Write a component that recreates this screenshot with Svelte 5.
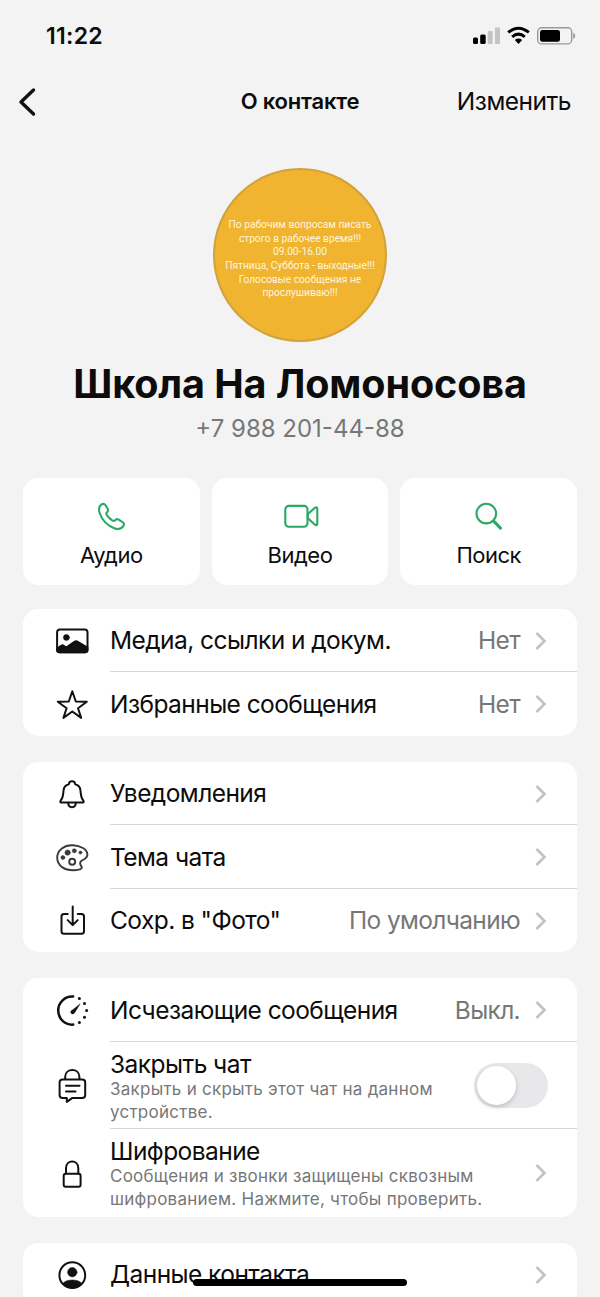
<script>
	const actions = [
		{ icon: 'phone', label: 'Аудио' },
		{ icon: 'video', label: 'Видео' },
		{ icon: 'search', label: 'Поиск' }
	];

	const about = [
		'По рабочим вопросам писать',
		'строго в рабочее время!!!',
		'09.00-16.00',
		'Пятница, Суббота - выходные!!!',
		'Голосовые сообщения не',
		'прослушиваю!!!'
	];

	const groups = [
		[
			{ icon: 'media', label: 'Медиа, ссылки и докум.', value: 'Нет' },
			{ icon: 'star', label: 'Избранные сообщения', value: 'Нет' }
		],
		[
			{ icon: 'bell', label: 'Уведомления' },
			{ icon: 'palette', label: 'Тема чата' },
			{ icon: 'save', label: 'Сохр. в "Фото"', value: 'По умолчанию' }
		],
		[
			{ icon: 'timer', label: 'Исчезающие сообщения', value: 'Выкл.' },
			{ icon: 'chatlock', label: 'Закрыть чат', lines: ['Закрыть и скрыть этот чат на данном', 'устройстве.'], toggle: true },
			{ icon: 'lock', label: 'Шифрование', lines: ['Сообщения и звонки защищены сквозным', 'шифрованием. Нажмите, чтобы проверить.'] }
		],
		[
			{ icon: 'person', label: 'Данные контакта' }
		]
	];

	let locked = $state(false);
</script>

{#snippet rowIcon(name)}
	<svg class="icon" viewBox="0 0 36 36">
		{#if name === 'media'}
			<rect x="3.1" y="6.4" width="30.4" height="22.8" rx="2.8" />
			<circle class="fill thin" cx="12.4" cy="14.4" r="3" />
			<path class="fill" d="M3.2 25.6l4-2.9q1.3-.9 2.6.1l2.4 1.7 8.3-5.7q1.6-1 3.2 0l9.7 5.8v2.3q0 2.3-2.4 2.3H5.6q-2.4 0-2.4-2.3z" />
		{:else if name === 'star'}
			<path d="M18.3 4.2l3.5 10.3 11 .2-8.8 6.6 3.2 9.6-8.9-6.4-8.900 6.400 3.200-9.600-8.800-6.600 11-.2z" />
		{:else if name === 'bell'}
			<path d="M7.2 26.400q-1.400 0-.7-1.500c2.900-3.200 2.500-6 3-10.200.3-3.500 2.200-5.700 5.300-6.400.2-4.100 6.200-4.100 6.400 0 3.100.7 5 2.900 5.300 6.400.5 4.200.1 7 3 10.200q.7 1.500-.7 1.500z" />
			<path d="M14.2 26.8c0 5.900 7.600 5.900 7.600 0" />
		{:else if name === 'palette'}
			<g class="soft">
				<path d="M19 5.300C10.500 4.800 3.200 10 3.200 17.600c0 8.300 7.300 12.900 17 12.600 4.800-.2 7.900-1.200 7.700-2.700-.2-1.300-2.800-3-1.500-5.500 1.400-2.700 7.200-2.400 7-7.800-.2-5-7-8.500-14.400-8.900z" />
				<circle cx="18.2" cy="21.7" r="3" />
				<circle class="fill thin" cx="8.9" cy="17.6" r="2" />
				<circle class="fill thin" cx="13.6" cy="12.6" r="2.7" />
				<circle class="fill thin" cx="20.3" cy="10.8" r="2.1" />
				<circle class="fill thin" cx="26.4" cy="12.5" r="1.6" />
			</g>
		{:else if name === 'save'}
			<path d="M13.7 11H10q-2.500 0-2.500 2.500v14.700q0 2.500 2.500 2.500h17.500q2.500 0 2.500-2.500V13.500Q30 11 27.500 11h-3.700M18.700 3.600v18.300M13.700 17.100l5 5 5-5" />
		{:else if name === 'timer'}
			<path class="thick" d="M19.2 3.500C10.900 2.900 4.200 9.500 4.200 17.600S10.900 32.200 19.200 31.600" />
			<path class="fill thin" d="M17.2 18l8.900-7.100-5.800 9.300q-1.500 1.500-2.900.3t-.2-2.500z" />
			<circle class="dot" cx="25.4" cy="5.6" r="1.5" />
			<circle class="dot" cx="30.5" cy="10.5" r="1.5" />
			<circle class="dot" cx="32.6" cy="17.5" r="1.5" />
			<circle class="dot" cx="30.5" cy="24.2" r="1.5" />
			<circle class="dot" cx="25.4" cy="29.6" r="1.5" />
		{:else if name === 'chatlock'}
			<path d="M11.2 11.500V8.600C11.200-.2 25.400-.2 25.400 8.600v2.900M8.600 11.600h19.600q3 0 3 3v12.300q0 3-3 3H18.400l-5.600 4v-4H8.600q-3 0-3-3V14.600q0-3 3-3zM12 17.700h13.500M12 23.500h9.500" />
		{:else if name === 'lock'}
			<rect x="9.7" y="17.7" width="16.9" height="13" rx="2" />
			<path d="M12 17.500v-5.200c0-9 12.300-9 12.300 0v5.200" />
		{:else if name === 'person'}
			<circle cx="18.3" cy="18.2" r="12.9" />
			<circle class="fill thin" cx="18.3" cy="15.2" r="4.7" />
			<path class="fill thin" d="M8.7 26.400c3.800-4.600 15.400-4.600 19.200 0-4.400 6.200-14.800 6.200-19.200 0z" />
		{/if}
	</svg>
{/snippet}

{#snippet actionIcon(name)}
	<svg class="action-icon" viewBox="0 0 36 32">
		{#if name === 'phone'}
			<path d="M8.200 4.700c1.900-1.300 3.400-.8 4.500.8l1.900 3.200c.9 1.500.7 2.500-.7 3.700-1 .9-.8 1.700.1 2.900 1.500 2 3.200 3.700 5.200 5.100 1.200.8 2 .9 2.900-.1 1.100-1.300 2.200-1.500 3.600-.7l3.900 2.500c1.600 1.100 1.900 2.500.7 4-2 2.700-5.400 3.500-9 2.100C14.300 25.500 9 19.700 6.800 13.500 5.500 9.700 5.600 6.700 8.200 4.700z" />
		{:else if name === 'video'}
			<rect x="3.3" y="5.9" width="22.2" height="20.8" rx="3.5" />
			<path d="M25.7 14.300l7.300-6.600q2.300-1.200 2.300 1v15q0 2.200-2.300 1l-7.300-6.600z" />
		{:else if name === 'search'}
			<circle cx="15.3" cy="13.6" r="9.8" />
			<path class="handle" d="M22.700 21.100l6.800 7" />
		{/if}
	</svg>
{/snippet}

<div class="screen">
	<div class="status">
		<span class="time">11:22</span>
		<svg class="indicators" viewBox="0 0 104 20">
			<rect x="1" y="11.5" width="5" height="6.5" rx="1.5" />
			<rect x="8.2" y="8.5" width="5.5" height="9.5" rx="1.5" />
			<rect class="off" x="15.7" y="5" width="5" height="13" rx="1" />
			<rect class="off" x="23" y="1.5" width="5" height="16.5" rx="1" />
			<path class="wave" d="M36.200 6.400Q46.500-2 56.800 6.400M40.200 10.800Q46.500 5.500 52.800 10.800" />
			<path d="M42.800 13.900q3.700-2.900 7.400 0L46.500 18z" />
			<rect class="shell" x="65.700" y="1.700" width="34" height="16.200" rx="4" />
			<rect x="68" y="4" width="20" height="11.800" rx="2.300" />
			<path class="tip" d="M101.200 6.700q2 .8 2 3.100t-2 3.100z" />
		</svg>
	</div>

	<header>
		<svg class="back" viewBox="0 0 20 30"><path d="M15.500 3L3 15l12.500 12" /></svg>
		<h1>О контакте</h1>
		<span class="edit">Изменить</span>
	</header>

	<div class="profile">
		<div class="avatar">
			{#each about as line}
				<span>{line}</span>
			{/each}
		</div>
		<h2>Школа На Ломоносова</h2>
		<p class="number">+7 988 201-44-88</p>
	</div>

	<div class="actions">
		{#each actions as action}
			<div class="action">
				{@render actionIcon(action.icon)}
				<span>{action.label}</span>
			</div>
		{/each}
	</div>

	{#each groups as group}
		<div class="group">
			{#each group as row}
				<div class="row" class:tall={row.lines}>
					{@render rowIcon(row.icon)}
					<div class="body">
						<div class="text">
							<div class="label">{row.label}</div>
							{#each row.lines ?? [] as line}
								<div class="sub">{line}</div>
							{/each}
						</div>
						{#if row.value}<span class="value">{row.value}</span>{/if}
						{#if row.toggle}
							<button class="toggle" class:on={locked} aria-label={row.label} onclick={() => (locked = !locked)}></button>
						{:else}
							<svg class="chevron" viewBox="0 0 12 20"><path d="M1.500 2l8 8-8 8" /></svg>
						{/if}
					</div>
				</div>
			{/each}
		</div>
	{/each}
	<div class="home"></div>
</div>

<style>
	:global(body) {
		background: #f3f3f3;
	}
	.screen {
		position: relative;
		height: 1297px;
		overflow: hidden;
		box-sizing: border-box;
		padding: 0 23px;
		background: #f3f3f3;
		color: #0c0c0c;
		font-family: Inter, 'Liberation Sans', sans-serif;
	}
	svg {
		display: block;
		flex: none;
	}
	h1, h2, p {
		margin: 0;
	}
	.status {
		display: flex;
		justify-content: space-between;
		align-items: center;
		height: 72px;
		padding-left: 23px;
	}
	.time {
		font-size: 23px;
		font-weight: 600;
		letter-spacing: 0.3px;
	}
	.indicators {
		width: 104px;
		height: 20px;
		margin: -1px 1px 0 0;
	}
	.off {
		fill: #c4c4c4;
	}
	.wave {
		fill: none;
		stroke: #000;
		stroke-width: 3;
	}
	.shell {
		fill: none;
		stroke: #9a9a9a;
		stroke-width: 1.4;
	}
	.tip {
		fill: #9a9a9a;
	}
	header {
		display: grid;
		grid-template-columns: 1fr auto 1fr;
		align-items: center;
		height: 59px;
		margin: 0 -5px;
	}
	.back {
		width: 20px;
		height: 30px;
	}
	.back path {
		fill: none;
		stroke: #111;
		stroke-width: 3.4;
		stroke-linecap: round;
		stroke-linejoin: round;
	}
	h1 {
		padding-bottom: 1px;
		font-size: 22px;
		font-weight: 600;
		letter-spacing: -0.2px;
	}
	.edit {
		justify-self: end;
		margin-right: 11px;
		padding-bottom: 1px;
		font-size: 24.5px;
		letter-spacing: -0.5px;
	}
	.profile {
		display: flex;
		flex-direction: column;
		align-items: center;
		height: 347px;
		box-sizing: border-box;
		padding-top: 37px;
	}
	.avatar {
		display: flex;
		flex-direction: column;
		align-items: center;
		justify-content: center;
		width: 174px;
		height: 174px;
		box-sizing: border-box;
		padding-top: 8px;
		border: 2px solid #cfa23a;
		border-radius: 50%;
		background: #f0b430;
		color: #fff4dc;
		font: 10.2px/13.6px Roboto, sans-serif;
		white-space: nowrap;
	}
	h2 {
		margin-top: 17px;
		font-size: 39.5px;
		line-height: 50px;
		font-weight: 700;
		letter-spacing: -0.1px;
		white-space: nowrap;
	}
	.number {
		margin-top: 4px;
		font-size: 24px;
		line-height: 32px;
		color: #777;
	}
	.actions {
		display: grid;
		grid-template-columns: repeat(3, 1fr);
		gap: 12px;
	}
	.action {
		display: flex;
		flex-direction: column;
		align-items: center;
		height: 107px;
		box-sizing: border-box;
		padding-top: 22px;
		border-radius: 15px;
		background: #fff;
		font-size: 22px;
		line-height: 28px;
		letter-spacing: -0.5px;
	}
	.action span {
		margin-top: 9px;
	}
	.action-icon {
		width: 36px;
		height: 32px;
		overflow: visible;
		fill: none;
		stroke: #2ba866;
		stroke-width: 2.1;
		stroke-linejoin: round;
		stroke-linecap: round;
	}
	.handle {
		stroke-width: 3;
	}
	.group {
		margin-top: 26px;
		border-radius: 15px;
		background: #fff;
	}
	.actions + .group {
		margin-top: 23.5px;
	}
	.row {
		display: flex;
		align-items: center;
		height: 63.5px;
		padding-left: 31px;
	}
	.row.tall {
		height: 87.5px;
	}
	.icon {
		width: 36px;
		height: 36px;
		margin: 2px 20px 0 0;
		overflow: visible;
		fill: none;
		stroke: #111;
		stroke-width: 2;
		stroke-linejoin: round;
		stroke-linecap: round;
	}
	.fill {
		fill: #111;
	}
	.icon .thin {
		stroke-width: 0.5;
	}
	.thick {
		stroke-width: 2.5;
	}
	.dot {
		fill: #111;
		stroke: none;
	}
	.soft {
		stroke: #3a3a3a;
		stroke-width: 1.9;
	}
	.soft .fill {
		fill: #3a3a3a;
	}
	.body {
		display: flex;
		flex: 1;
		align-items: center;
		height: 100%;
		box-sizing: border-box;
		padding-right: 30px;
		border-bottom: 1px solid #d9d9d9;
	}
	.row:last-child .body {
		border-bottom-color: transparent;
	}
	.text {
		flex: 1;
		padding-top: 1px;
		white-space: nowrap;
	}
	.label {
		font-size: 24.5px;
		line-height: 30px;
		letter-spacing: -0.56px;
	}
	.tall .text {
		padding-top: 5px;
	}
	.tall .label {
		line-height: 26px;
		padding-bottom: 1px;
	}
	.sub {
		font-size: 17px;
		line-height: 23px;
		letter-spacing: 0.25px;
		color: #777;
	}
	.value {
		padding-top: 1px;
		font-size: 24.5px;
		letter-spacing: -0.65px;
		color: #777;
	}
	.chevron {
		width: 12px;
		height: 20px;
		margin: 2px 0 0 15px;
	}
	.chevron path {
		fill: none;
		stroke: #c2c2c2;
		stroke-width: 2.6;
	}
	.toggle {
		width: 74px;
		height: 45px;
		margin: 2px -1px 0 0;
		padding: 3px;
		border: 0;
		border-radius: 23px;
		background: #e8e8ea;
	}
	.toggle::before {
		content: '';
		display: block;
		width: 39px;
		height: 39px;
		border-radius: 50%;
		background: #fff;
		box-shadow: 0 2px 5px rgba(0, 0, 0, 0.18);
	}
	.toggle.on {
		background: #2ba866;
	}
	.toggle.on::before {
		margin-left: 29px;
	}
	.home {
		position: absolute;
		left: 193px;
		top: 1279px;
		width: 214px;
		height: 7px;
		border-radius: 4px;
		background: #000;
	}
</style>
